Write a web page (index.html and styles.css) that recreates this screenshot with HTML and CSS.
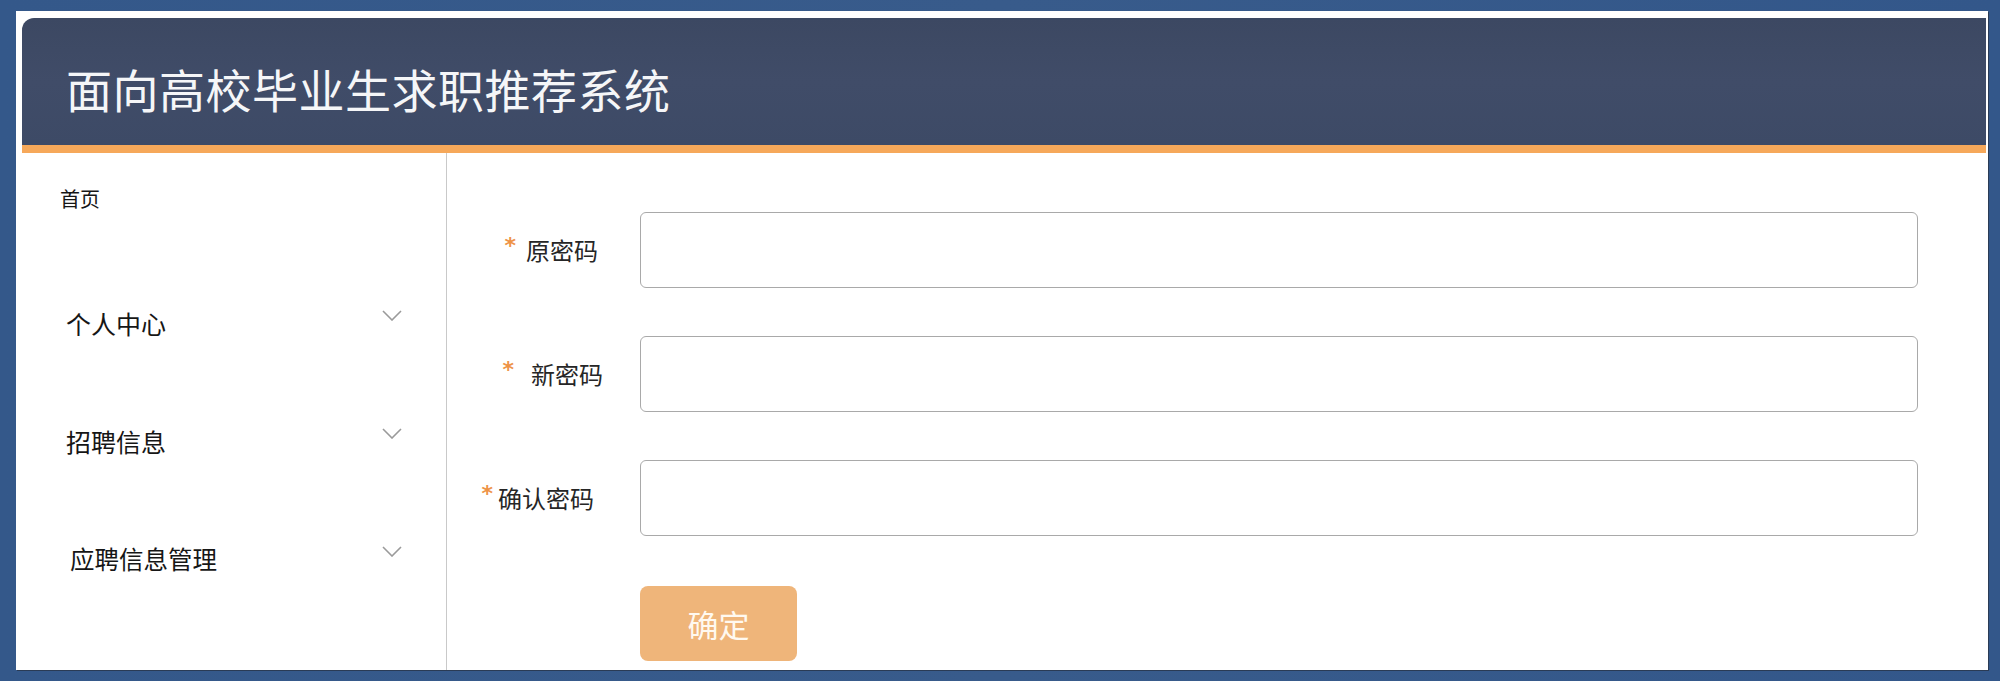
FILE: index.html
```html
<!DOCTYPE html>
<html lang="zh-CN">
<head>
<meta charset="utf-8">
<title>面向高校毕业生求职推荐系统</title>
<link rel="stylesheet" href="styles.css">
</head>
<body>
<div class="frame">
  <header class="header">
    <h1 class="title">面向高校毕业生求职推荐系统</h1>
  </header>
  <div class="accent"></div>
  <div class="main">
    <nav class="sidebar">
      <div class="nav-home">首页</div>
      <div class="nav-item"><span class="nav-text">个人中心</span><svg class="chev" viewBox="0 0 20 11" width="20" height="11"><path d="M1 1 L10 10 L19 1" fill="none" stroke="#9a9a9a" stroke-width="1.6"/></svg></div>
      <div class="nav-item"><span class="nav-text">招聘信息</span><svg class="chev" viewBox="0 0 20 11" width="20" height="11"><path d="M1 1 L10 10 L19 1" fill="none" stroke="#9a9a9a" stroke-width="1.6"/></svg></div>
      <div class="nav-item"><span class="nav-text nav-text-wide">应聘信息管理</span><svg class="chev" viewBox="0 0 20 11" width="20" height="11"><path d="M1 1 L10 10 L19 1" fill="none" stroke="#9a9a9a" stroke-width="1.6"/></svg></div>
    </nav>
    <section class="content">
      <form class="form">
        <label class="label"><span class="star">*</span><span class="label-text">原密码</span></label>
        <input class="field" type="password">
        <label class="label label-new"><span class="star">*</span><span class="label-text">新密码</span></label>
        <input class="field" type="password">
        <label class="label label-confirm"><span class="star">*</span><span class="label-text">确认密码</span></label>
        <input class="field" type="password">
        <div></div>
        <div class="actions"><button class="btn" type="button">确定</button></div>
      </form>
    </section>
  </div>
</div>
</body>
</html>
```
FILE: styles.css
```css
html, body {
  margin: 0;
  padding: 0;
  height: 100%;
}
body {
  background: linear-gradient(90deg, #34588a 0%, #385b8b 50%, #33578a 100%);
  font-family: "Noto Sans CJK SC", "Noto Sans", sans-serif;
  overflow: hidden;
}
.frame {
  box-sizing: border-box;
  margin: 11px 12px 0 16px;
  height: 659px;
  background: #ffffff;
  padding: 7px 2px 0 6px;
  display: flex;
  flex-direction: column;
  box-shadow: 1px 1px 0 #2a3b55;
}
.header {
  height: 127px;
  box-sizing: border-box;
  background: linear-gradient(180deg, #3c4862 0%, #404c68 50%, #3d4a66 100%);
  border-radius: 12px 0 0 0;
  display: flex;
  align-items: center;
  padding: 12px 0 0 44px;
}
.title {
  margin: 0;
  font-weight: 400;
  font-size: 46px;
  letter-spacing: 0.5px;
  color: #f5f6f8;
  line-height: 1;
}
.accent {
  height: 8px;
  background: #f6a85a;
}
.main {
  flex: 1;
  display: flex;
  min-height: 0;
}
.sidebar {
  width: 424px;
  border-right: 1px solid #c9c9c9;
  display: flex;
  flex-direction: column;
  color: #161616;
}
.nav-home {
  height: 112px;
  box-sizing: border-box;
  padding: 32px 0 0 38px;
  font-size: 20px;
  line-height: 28px;
}
.nav-item {
  height: 118px;
  display: flex;
  align-items: center;
  justify-content: space-between;
  padding: 0 44px 0 44px;
}
.nav-text {
  font-size: 25px;
  line-height: 32px;
  margin-bottom: 3px;
}
.nav-text-wide {
  margin-left: 4px;
  font-size: 24.5px;
}
.chev {
  margin-bottom: 18px;
}
.content {
  flex: 1;
  padding-top: 59px;
}
.form {
  display: grid;
  grid-template-columns: 151px 1278px;
  column-gap: 42px;
  row-gap: 48px;
  align-items: center;
}
.label {
  display: flex;
  justify-content: flex-end;
  align-items: flex-start;
  gap: 10px;
  color: #262626;
  font-size: 24px;
  line-height: 32px;
}
.label-new {
  gap: 17px;
  margin-right: -5px;
}
.label-confirm {
  gap: 5px;
  margin-right: 4px;
}
.star {
  color: #ee9346;
  font-family: "DejaVu Sans", sans-serif;
  font-weight: 700;
  font-size: 22px;
  line-height: 22px;
  margin-top: 1px;
}
.field {
  box-sizing: border-box;
  height: 76px;
  border: 1.5px solid #a9a9a9;
  border-radius: 6px;
  background: #fff;
  outline: none;
  margin: 0;
}
.actions {
  margin-top: 2px;
}
.btn {
  width: 157px;
  height: 75px;
  border: none;
  border-radius: 8px;
  background: #efb57a;
  color: #fff9f0;
  font-family: "Noto Sans CJK SC", "Noto Sans", sans-serif;
  font-size: 31px;
  padding: 0;
}
```
